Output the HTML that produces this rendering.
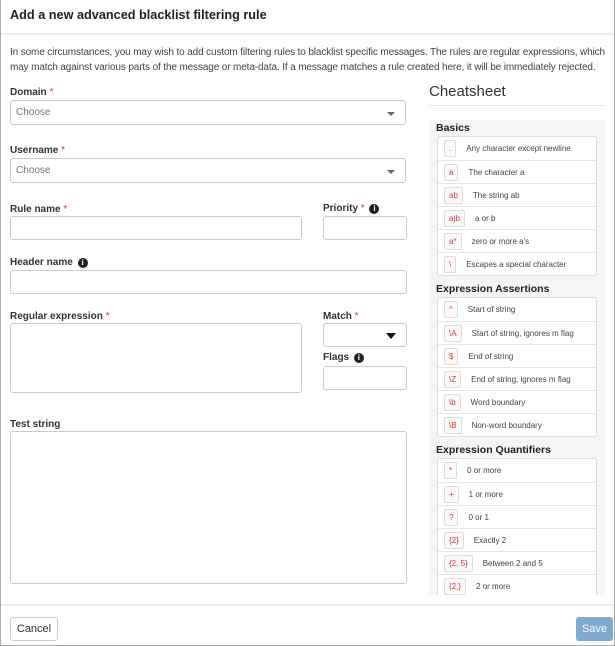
<!DOCTYPE html>
<html><head><style>
*{box-sizing:border-box;margin:0;padding:0}
body{width:615px;height:646px;overflow:hidden;background:#fff;font-family:"Liberation Sans",Arial,sans-serif;color:#333;position:relative}
.frame{position:absolute;left:0;top:0;width:615px;height:646px;border:1px solid #aaa;border-top:none}
.a{position:absolute}
.t{font-size:12.7px;font-weight:bold;left:10px;top:8px;color:#222}
.hr{position:absolute;left:1px;right:1px;height:2px;background:#eee}
.p{left:10px;top:45px;font-size:10px;line-height:15px;color:#444;white-space:nowrap;letter-spacing:-0.13px}
.l{font-size:10px;font-weight:bold;color:#333}
.l i{color:#d33;font-style:normal;font-weight:normal}
.in{border:1px solid #ccc;border-radius:3px;background:#fff}
.sel{font-size:10px;color:#777;padding:6px 5px}
.car{position:absolute;right:10px;top:11px;border-left:4px solid transparent;border-right:4px solid transparent;border-top:4px solid #666}
.info{display:inline-block;width:10px;height:10px;border-radius:50%;background:#222;color:#fff;font-size:8px;text-align:center;line-height:10px;vertical-align:0px;font-weight:bold;margin-left:2px}
.cs{left:429px;top:120px;width:176px;height:475px;background:#f4f5f7;overflow:hidden}
.h{font-size:10.5px;font-weight:bold;color:#222;position:absolute;left:7px}
.box{position:absolute;left:8px;width:160px;background:#fff;border:1px solid #ddd;border-radius:3px}
.r{height:23px;border-top:1px solid #e6e6e6;font-size:8px;color:#444;display:flex;align-items:center;padding-left:6px}
.r:first-child{border-top:none}
.c{font-family:"Liberation Sans",sans-serif;color:#e33;font-size:8px;border:1px solid #ddd;border-radius:2px;padding:3px 4px;margin-right:10px;background:#fafafa}
.btn{font-size:11px;border-radius:3px;text-align:center;line-height:22px}
</style></head><body>
<div class="frame"></div>
<div class="a t">Add a new advanced blacklist filtering rule</div>
<div class="hr" style="top:33px"></div>
<div class="a p">In some circumstances, you may wish to add custom filtering rules to blacklist specific messages. The rules are regular expressions, which<br>may match against various parts of the message or meta-data. If a message matches a rule created here, it will be immediately rejected.</div>

<div class="a l" style="left:10px;top:87px">Domain <i>*</i></div>
<div class="a in sel" style="left:10px;top:100px;width:396px;height:25px">Choose<span class="car"></span></div>
<div class="a l" style="left:10px;top:145px">Username <i>*</i></div>
<div class="a in sel" style="left:10px;top:158px;width:396px;height:25px">Choose<span class="car"></span></div>

<div class="a l" style="left:10px;top:204px">Rule name <i>*</i></div>
<div class="a in" style="left:10px;top:216px;width:292px;height:24px"></div>
<div class="a l" style="left:323px;top:203px">Priority <i>*</i> <span class="info">i</span></div>
<div class="a in" style="left:323px;top:216px;width:84px;height:24px"></div>

<div class="a l" style="left:10px;top:257px">Header name <span class="info">i</span></div>
<div class="a in" style="left:10px;top:270px;width:397px;height:24px"></div>

<div class="a l" style="left:10px;top:311px">Regular expression <i>*</i></div>
<div class="a in" style="left:10px;top:323px;width:292px;height:70px"></div>
<div class="a l" style="left:323px;top:311px">Match <i>*</i></div>
<div class="a in" style="left:323px;top:323px;width:84px;height:24px"><span class="car" style="top:9px;border-left-width:5px;border-right-width:5px;border-top:6px solid #111"></span></div>
<div class="a l" style="left:323px;top:352px">Flags <span class="info">i</span></div>
<div class="a in" style="left:323px;top:366px;width:84px;height:24px"></div>

<div class="a l" style="left:10px;top:419px">Test string</div>
<div class="a in" style="left:10px;top:431px;width:397px;height:153px"></div>

<div class="a" style="left:429px;top:83px;font-size:15px;color:#333">Cheatsheet</div>
<div class="a" style="left:429px;top:105px;width:176px;height:1px;background:#e5e5e5"></div>
<div class="a cs">
<div class="h" style="top:2px">Basics</div>
<div class="box" style="top:16px">
<div class="r"><span class="c">.</span>Any character except newline</div>
<div class="r"><span class="c">a</span>The character a</div>
<div class="r"><span class="c">ab</span>The string ab</div>
<div class="r"><span class="c">a|b</span>a or b</div>
<div class="r"><span class="c">a*</span>zero or more a's</div>
<div class="r"><span class="c">\</span>Escapes a special character</div>
</div>
<div class="h" style="top:163px">Expression Assertions</div>
<div class="box" style="top:177px">
<div class="r"><span class="c">^</span>Start of string</div>
<div class="r"><span class="c">\A</span>Start of string, ignores m flag</div>
<div class="r"><span class="c">$</span>End of string</div>
<div class="r"><span class="c">\Z</span>End of string, ignores m flag</div>
<div class="r"><span class="c">\b</span>Word boundary</div>
<div class="r"><span class="c">\B</span>Non-word boundary</div>
</div>
<div class="h" style="top:324px">Expression Quantifiers</div>
<div class="box" style="top:338px">
<div class="r"><span class="c">*</span>0 or more</div>
<div class="r"><span class="c">+</span>1 or more</div>
<div class="r"><span class="c">?</span>0 or 1</div>
<div class="r"><span class="c">{2}</span>Exactly 2</div>
<div class="r"><span class="c">{2, 5}</span>Between 2 and 5</div>
<div class="r"><span class="c">{2,}</span>2 or more</div>
</div>
</div>

<div class="hr" style="top:604px"></div>
<div class="a btn" style="left:10px;top:617px;width:48px;height:24px;border:1px solid #ccc;color:#333">Cancel</div>
<div class="a btn" style="left:576px;top:617px;width:37px;height:24px;background:#7fa9cf;color:#fff;line-height:24px">Save</div>
</body></html>
